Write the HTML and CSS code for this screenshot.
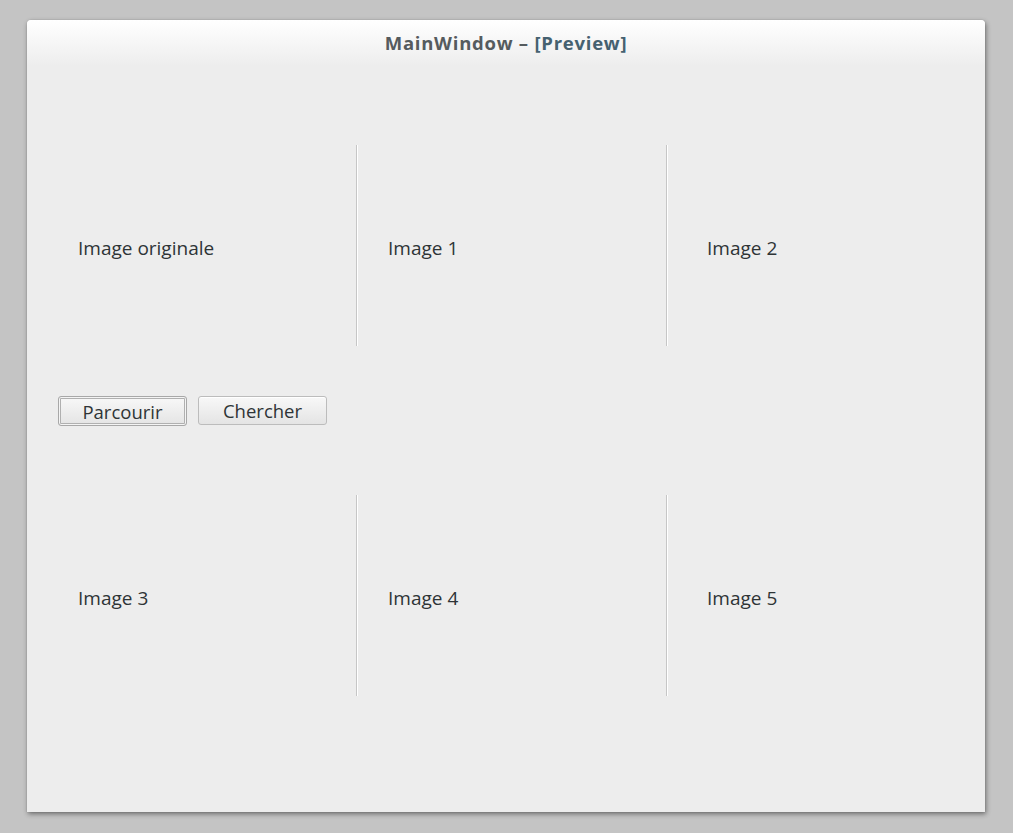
FILE: index.html
```html
<!DOCTYPE html>
<html>
<head>
<meta charset="utf-8">
<link rel="stylesheet" href="styles.css">
</head>
<body>
<div class="window">
  <div class="titlebar"><span class="t-main">MainWindow – </span><span class="t-prev">[Preview]</span></div>
  <div class="content">
    <div class="row row1">
      <div class="cell c1"><span class="lbl">Image originale</span></div>
      <div class="sep"></div>
      <div class="cell c2"><span class="lbl">Image 1</span></div>
      <div class="sep"></div>
      <div class="cell c3"><span class="lbl">Image 2</span></div>
    </div>
    <div class="buttons">
      <button class="btn focused">Parcourir</button>
      <button class="btn">Chercher</button>
    </div>
    <div class="row row2">
      <div class="cell c1"><span class="lbl">Image 3</span></div>
      <div class="sep"></div>
      <div class="cell c2"><span class="lbl">Image 4</span></div>
      <div class="sep"></div>
      <div class="cell c3"><span class="lbl">Image 5</span></div>
    </div>
  </div>
</div>
</body>
</html>
```
FILE: styles.css
```css
html, body {
  margin: 0;
  padding: 0;
  background: #c4c4c4;
  width: 1013px;
  height: 833px;
  overflow: hidden;
}
body {
  padding: 20px 0 0 27px;
  box-sizing: border-box;
  font-family: "Open Sans", "Noto Sans", sans-serif;
}
.window {
  width: 958px;
  height: 792px;
  background: #ededed;
  border-radius: 4px 4px 0 0;
  box-shadow: 1px 2px 5px rgba(0,0,0,0.45), 0 0 1px rgba(0,0,0,0.3);
  display: flex;
  flex-direction: column;
}
.titlebar {
  height: 48px;
  background: linear-gradient(#ffffff, #ededed 46px);
  border-radius: 4px 4px 0 0;
  text-align: center;
  font-weight: 700;
  font-size: 18.5px;
  letter-spacing: 0.75px;
  line-height: 45px;
  color: #555b5e;
}
.t-prev { color: #456170; }
.content {
  display: flex;
  flex-direction: column;
  padding-top: 77px;
}
.row {
  display: grid;
  grid-template-columns: 329px 2px 308px 2px 317px;
  height: 201px;
}
.sep {
  border-left: 1px solid #c6c6c6;
  border-right: 1px solid #ffffff;
  box-sizing: border-box;
  width: 2px;
}
.cell {
  display: flex;
  align-items: center;
  padding-top: 4px;
  box-sizing: border-box;
  font-size: 19px;
  color: #2e3436;
}
.c1 { padding-left: 51px; }
.c2 { padding-left: 30px; }
.c3 { padding-left: 39px; }
.buttons {
  display: flex;
  gap: 11px;
  padding-left: 31px;
  margin-top: 50px;
  height: 99px;
  align-items: flex-start;
}
.btn {
  font-family: "Open Sans", "Noto Sans", sans-serif;
  font-size: 18.5px;
  color: #2e3436;
  height: 29px;
  width: 129px;
  padding: 0;
  line-height: 26px;
  border: 1px solid #bcbcbc;
  border-radius: 3px;
  background: linear-gradient(#f8f8f8, #e4e4e4);
  box-shadow: inset 0 1px 0 #ffffff;
}
.btn.focused {
  width: 129px;
  height: 30px;
  padding-top: 2px;
  border-color: #a8a8a8;
  box-shadow: inset 0 0 0 1px #f4f4f4, inset 0 0 0 2px #b0b0b0;
}
```
